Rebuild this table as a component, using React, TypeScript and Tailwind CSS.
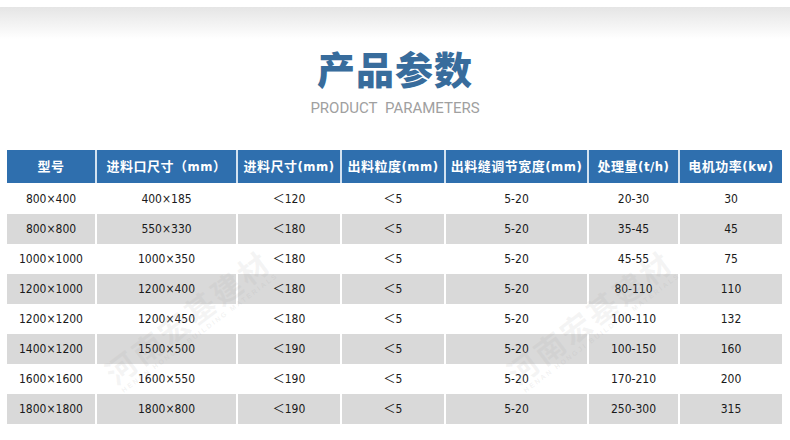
const headers = [
  "型号",
  "进料口尺寸（mm）",
  "进料尺寸(mm)",
  "出料粒度(mm)",
  "出料缝调节宽度(mm)",
  "处理量(t/h)",
  "电机功率(kw)",
];

const rows: string[][] = [
  ["800×400", "400×185", "＜120", "＜5", "5-20", "20-30", "30"],
  ["800×800", "550×330", "＜180", "＜5", "5-20", "35-45", "45"],
  ["1000×1000", "1000×350", "＜180", "＜5", "5-20", "45-55", "75"],
  ["1200×1000", "1200×400", "＜180", "＜5", "5-20", "80-110", "110"],
  ["1200×1200", "1200×450", "＜180", "＜5", "5-20", "100-110", "132"],
  ["1400×1200", "1500×500", "＜190", "＜5", "5-20", "100-150", "160"],
  ["1600×1600", "1600×550", "＜190", "＜5", "5-20", "170-210", "200"],
  ["1800×1800", "1800×800", "＜190", "＜5", "5-20", "250-300", "315"],
];

const cols = "grid grid-cols-[88px_139px_102px_102px_141px_89px_102px] gap-x-[2px]";

function Watermark({ left }: { left: string }) {
  return (
    <div
      className={`pointer-events-none absolute top-[320px] ${left} flex -translate-x-1/2 -translate-y-1/2 -rotate-[37deg] flex-col items-center select-none`}
    >
      <span className="text-[30px] font-bold leading-none tracking-[3px] text-[#a8a8a8]/12 [font-family:'Noto_Sans_CJK_SC',sans-serif]">
        河南宏基建材
      </span>
      <span className="mt-[2px] text-[7px] font-bold leading-none tracking-[2px] text-[#a8a8a8]/15 [font-family:'Liberation_Sans',sans-serif]">
        HENAN HONGJI BUILDING MATERIALS
      </span>
    </div>
  );
}

export default function App() {
  return (
    <div className="relative h-[440px] w-[790px] overflow-hidden bg-white">
      <div className="h-[7px]" />
      <div className="h-[32px] bg-gradient-to-b from-[#e5e5e5] to-white" />

      <div className="flex flex-col items-center pt-[6px]">
        <h1 className="text-[38px] font-black leading-[46px] tracking-[1px] text-[#386c9c] [font-family:'Noto_Sans_CJK_SC',sans-serif]">
          产品参数
        </h1>
        <p className="mt-[8px] text-[15px] leading-[18px] text-[#a0a0a0] [word-spacing:4px] [font-family:Roboto,'Liberation_Sans',sans-serif]">
          PRODUCT PARAMETERS
        </p>
      </div>

      <div className="absolute left-[7px] top-[150px]">
        <div className={`${cols} h-[33px] bg-[#d3e2f1]`}>
          {headers.map((h) => (
            <div
              key={h}
              className="flex items-center justify-center bg-[#2f6fae] text-[13px] font-bold tracking-[0.5px] text-white [font-family:'DejaVu_Sans_Condensed','DejaVu_Sans','Noto_Sans_CJK_SC',sans-serif]"
            >
              {h}
            </div>
          ))}
        </div>
        <div className="mt-[1px] flex flex-col">
          {rows.map((r, i) => (
            <div key={i} className={`${cols} h-[30px]`}>
              {r.map((c, j) => (
                <div
                  key={j}
                  className={`flex items-center justify-center text-[12px] text-[#1a1a1a] [font-family:'DejaVu_Sans_Condensed','DejaVu_Sans','Noto_Sans_CJK_SC',sans-serif] ${
                    i % 2 === 1 ? "bg-[#d9d9d9]" : "bg-white"
                  }`}
                >
                  {c}
                </div>
              ))}
            </div>
          ))}
        </div>
      </div>

      <Watermark left="left-[190px]" />
      <Watermark left="left-[592px]" />
    </div>
  );
}
